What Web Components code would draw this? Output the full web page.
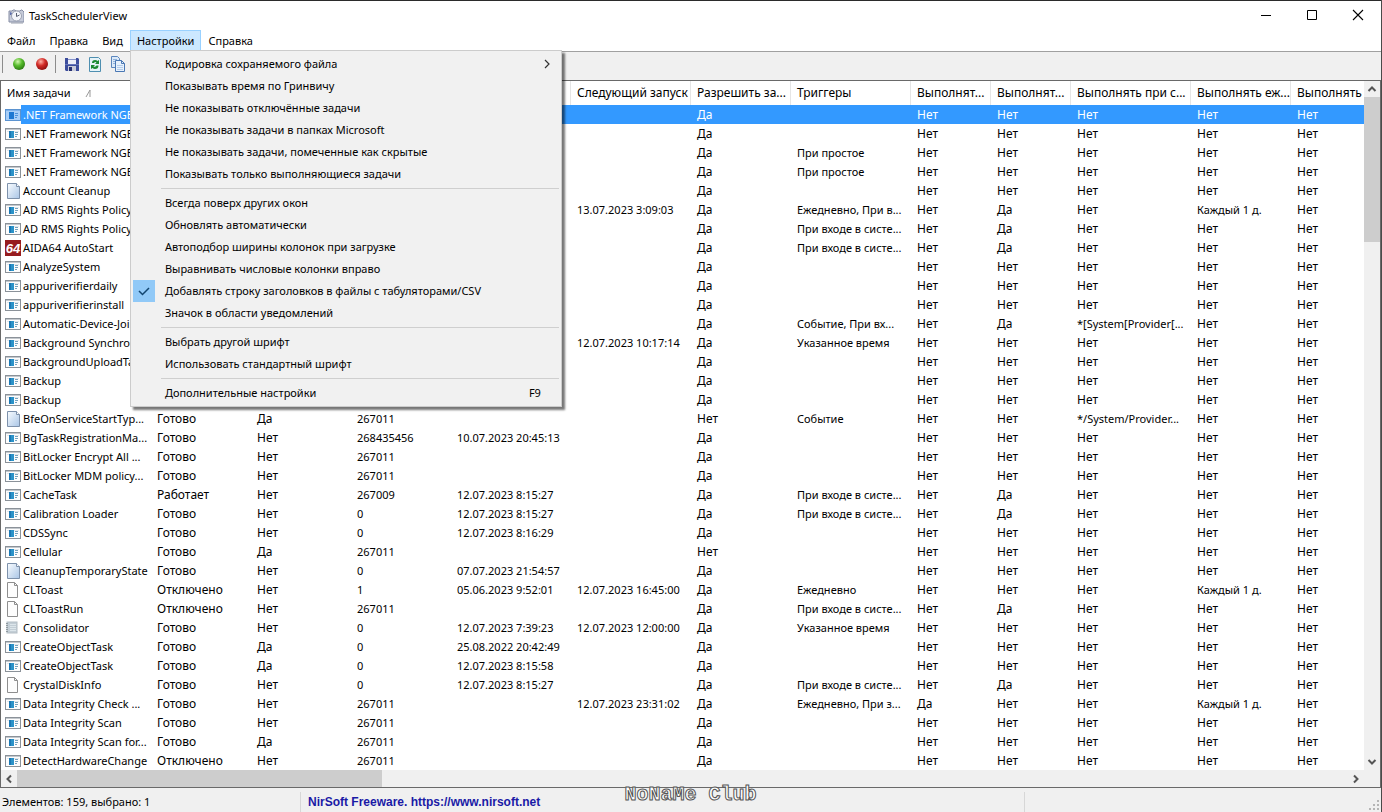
<!DOCTYPE html>
<html lang="ru">
<head>
<meta charset="utf-8">
<title>TaskSchedulerView</title>
<style>
  html, body { margin: 0; height: 100%; overflow: hidden; }
  body { font: 11px/18px "Noto Sans", "Open Sans", sans-serif; color: #000; background: #f0f0f0; }
</style>
</head>
<body>
<task-app></task-app>

<script>
const define = (name, html, setup) => customElements.define(name, class extends HTMLElement {
  constructor() {
    super();
    this.attachShadow({ mode: 'open' }).innerHTML = html;
  }
  connectedCallback() { if (setup) setup(this, this.shadowRoot); }
});

/* ---------- icons ---------- */
const ICONS = {
  clock: `<path d="M1 3h3l1-1h2l1 1h4l1-1h1l2 2v10H1z" fill="#c6cbd9" stroke="#858da4"/><path d="M2 4l2 1v2H2z" fill="#5d6fae"/><circle cx="8.500" cy="8" r="5" fill="#f3f5fa" stroke="#9ba1b1"/><path d="M8.500 5v3.500l3-1.500" fill="none" stroke="#555c70"/><path d="M3 15h12" stroke="#9aa0ae"/>`,
  app: `<rect x=".5" y="2.500" width="15" height="11" fill="#fdfdfd" stroke="#8b9299"/><path d="M1 3.500h14" stroke="#c3c8cd"/><path d="M2 5.500h12" stroke="#e4e7ea"/><rect x="4" y="5" width="5" height="7" fill="#1b78b4"/><rect x="6" y="5" width="3" height="7" fill="#2b92c8"/><path d="M10 6.500h3M10 8.500h3M10 10.500h2" stroke="#74a1bd"/>`,
  appsel: `<rect x=".5" y="2.500" width="15" height="11" fill="#a9cff8" stroke="#5b93d0"/><path d="M1 3.500h14" stroke="#7fb2ea"/><rect x="4" y="5" width="5" height="7" fill="#1e78d2"/><path d="M10 6.500h3M10 8.500h3M10 10.500h2" stroke="#4d93dc"/>`,
  docblue: `<defs><linearGradient id="g" x1="0" y1="0" x2="1" y2="1"><stop offset="0" stop-color="#fafdff"/><stop offset="1" stop-color="#a9c5e6"/></linearGradient></defs><path d="M2.500.5h9l3 3v12h-12z" fill="url(#g)" stroke="#7d91ab"/><path d="M11.500.5v3h3" fill="#fff" stroke="#7d91ab"/>`,
  doc: `<path d="M2.500.5h7l3 3v12h-10z" fill="#fdfdfd" stroke="#8e8e8e"/><path d="M9.500.5v3h3" fill="none" stroke="#8e8e8e"/>`,
  aida: `<rect width="16" height="16" fill="#961c1f"/><text x="8" y="13" text-anchor="middle" fill="#fff" font-family="Liberation Sans, sans-serif" font-weight="bold" font-style="italic" font-size="13">64</text>`,
  book: `<rect x="2" y="2" width="10" height="11" fill="#c3ced6" stroke="#b4bec5"/><path d="M5 4.500h6M5 6.500h6M5 8.500h6M5 10.500h6" stroke="#dde6eb"/><path d="M1 3.500h2M1 5.500h2M1 7.500h2M1 9.500h2M1 11.500h2" stroke="#8f999f"/>`,
  green: `<defs><radialGradient id="g" cx=".4" cy=".3" r=".7"><stop offset="0" stop-color="#d2f7b0"/><stop offset=".5" stop-color="#56bb2c"/><stop offset="1" stop-color="#2d7d14"/></radialGradient></defs><circle cx="8" cy="8" r="6" fill="url(#g)"/>`,
  red: `<defs><radialGradient id="g" cx=".4" cy=".3" r=".7"><stop offset="0" stop-color="#ffb3a8"/><stop offset=".5" stop-color="#d22c28"/><stop offset="1" stop-color="#8f1010"/></radialGradient></defs><circle cx="8" cy="8" r="6" fill="url(#g)"/>`,
  save: `<path d="M1 2h13l1 1v12H2l-1-1z" fill="#3c4d9c"/><rect x="4" y="2" width="8" height="6" fill="#eceef8"/><path d="M4 3.500h8" stroke="#8692c8"/><path d="M1 8.500h14" stroke="#6474ba"/><rect x="4" y="10" width="8" height="5" fill="#c8cbd9"/><rect x="5" y="11" width="3" height="4" fill="#273171"/>`,
  refresh: `<path d="M2.500 1.500h9l2 2v12h-11z" fill="#e6f3f8" stroke="#4f8fb0"/><path d="M5 7q0-3 3-3 1.500 0 2.500 1L12 4v4H8l1.500-1.500Q8 5.500 7 7z" fill="#1c8a32"/><path d="M11.500 9.500q0 3.500-3.500 3.500-1.500 0-2.500-1L4 13V9h4l-1.500 1.500q1.500 1 3-1z" fill="#1c8a32"/>`,
  copy: `<path d="M1.500.5h6l2 2v9h-8z" fill="#dbe9f8" stroke="#5b86bd"/><path d="M3 3.500h4M3 5.500h3M3 7.500h3" stroke="#8fb1da"/><path d="M5.500 4.500h6l3 3v8h-9z" fill="#e7f1fc" stroke="#4a78b4"/><path d="M11.500 4.500v3h3" fill="none" stroke="#4a78b4"/><path d="M7 9.500h6M7 11.500h6M7 13.500h6" stroke="#b4cdeb"/>`,
  check: `<path d="M3 8l3.500 3.500L13 5" fill="none" stroke="#12456f" stroke-width="1.500"/>`,
  sub: `<path d="M6 4l4 4-4 4" fill="none" stroke="#333" stroke-width="1.200"/>`,
  min: `<path d="M3 7.500h10" stroke="#000"/>`,
  max: `<path d="M3.500 2.500h9v9h-9z" fill="none" stroke="#000"/>`,
  close: `<path d="M3 2l10 10M13 2L3 12" stroke="#000" stroke-width="1.100"/>`,
  up: `<path d="M4.500 10L8 6.500l3.500 3.500" fill="none" stroke="#555" stroke-width="2"/>`,
  down: `<path d="M4.500 6L8 9.500 11.500 6" fill="none" stroke="#555" stroke-width="2"/>`,
  left: `<path d="M10 4.500L6.500 8l3.500 3.500" fill="none" stroke="#555" stroke-width="2"/>`,
  right: `<path d="M6 4.500L9.500 8 6 11.500" fill="none" stroke="#555" stroke-width="2"/>`,
  sort: `<path d="M6 12l4-7v7" fill="none" stroke="#999"/>`,
  grip: `<g fill="#b5b5b5"><path d="M12 4h2v2h-2zM12 8h2v2h-2zM12 12h2v2h-2zM8 8h2v2H8zM8 12h2v2H8zM4 12h2v2H4z"/></g>`
};
define('ui-icon', `<style>:host{display:block;flex:none;width:16px;height:16px}svg{display:block}</style><svg width="16" height="16" viewBox="0 0 16 16" aria-hidden="true"></svg>`,
  (el, root) => { root.querySelector('svg').innerHTML = ICONS[el.getAttribute('name')] || ''; });

/* ---------- title bar ---------- */
define('title-bar', `<style>
  :host{display:flex;align-items:center;height:29px;background:#fff;border-top:1px solid #2b2b2b;padding-left:8px}
  h1{font:inherit;margin:0 auto 0 5px}
  button{display:grid;place-items:center;width:46px;height:29px;border:0;padding:0;background:none}
</style>
<ui-icon name="clock"></ui-icon><h1><slot></slot></h1>
<button aria-label="Свернуть"><ui-icon name="min"></ui-icon></button>
<button aria-label="Развернуть"><ui-icon name="max"></ui-icon></button>
<button aria-label="Закрыть"><ui-icon name="close"></ui-icon></button>`);

/* ---------- menus ---------- */
define('menu-item', `<style>
  :host{display:block}
  button{display:flex;align-items:center;width:100%;height:22px;border:0;padding:0;background:none;font:inherit;color:inherit;text-align:left;white-space:nowrap}
  .mark{display:grid;place-items:center;width:22px;height:22px;margin-right:10px}
  :host([checked]) .mark{background:#91c9f7}
  .key{margin-left:auto;padding-right:18px}
  .sub{margin-right:4px;margin-left:auto}
</style><button role="menuitem"><span class="mark"></span><slot></slot></button>`, (el, root) => {
  if (el.hasAttribute('checked')) root.querySelector('.mark').innerHTML = '<ui-icon name="check"></ui-icon>';
  const tail = el.hasAttribute('submenu') ? '<ui-icon class="sub" name="sub"></ui-icon>'
    : el.getAttribute('key') ? `<span class="key">${el.getAttribute('key')}</span>` : '';
  root.querySelector('button').insertAdjacentHTML('beforeend', tail);
});
define('menu-separator', `<style>:host{display:block;height:1px;margin:3px 0 3px 28px;background:#cfcfcf}</style>`);
define('drop-menu', `<style>
  :host{display:block;width:426px;padding:2px;background:#f1f1f1;border:1px solid #ccc;box-shadow:3px 3px 2px #0008}
</style><slot></slot>`);
define('menu-bar', `<style>
  :host{display:flex;height:21px;background:#fff;border-bottom:1px solid #a0a0a0}
  .entry{position:relative}
  button{height:21px;padding:0 7px;border:0;background:none;font:inherit;color:inherit}
  .open button{background:#cce8ff;box-shadow:inset 0 0 0 1px #99d1ff}
  drop-menu{position:absolute;z-index:5;top:20px;left:0}
</style>
<button>Файл</button><button>Правка</button><button>Вид</button>
<div class="entry open"><button aria-expanded="true">Настройки</button>
<drop-menu role="menu">
  <menu-item submenu>Кодировка сохраняемого файла</menu-item>
  <menu-item>Показывать время по Гринвичу</menu-item>
  <menu-item>Не показывать отключённые задачи</menu-item>
  <menu-item>Не показывать задачи в папках Microsoft</menu-item>
  <menu-item>Не показывать задачи, помеченные как скрытые</menu-item>
  <menu-item>Показывать только выполняющиеся задачи</menu-item>
  <menu-separator></menu-separator>
  <menu-item>Всегда поверх других окон</menu-item>
  <menu-item>Обновлять автоматически</menu-item>
  <menu-item>Автоподбор ширины колонок при загрузке</menu-item>
  <menu-item>Выравнивать числовые колонки вправо</menu-item>
  <menu-item checked>Добавлять строку заголовков в файлы с табуляторами/CSV</menu-item>
  <menu-item>Значок в области уведомлений</menu-item>
  <menu-separator></menu-separator>
  <menu-item>Выбрать другой шрифт</menu-item>
  <menu-item>Использовать стандартный шрифт</menu-item>
  <menu-separator></menu-separator>
  <menu-item key="F9">Дополнительные настройки</menu-item>
</drop-menu></div>
<button>Справка</button>`);

/* ---------- toolbar ---------- */
define('tool-bar', `<style>
  :host{display:flex;align-items:center;height:24px;padding-bottom:4px;background:#f0f0f0;border-bottom:1px solid #696969}
  button{display:grid;place-items:center;width:23px;height:22px;border:0;padding:0;background:none}
  i{width:1px;height:18px;background:#8c8c8c;margin:0 4px 0 2px}
</style><i></i>
<button aria-label="Включить"><ui-icon name="green"></ui-icon></button>
<button aria-label="Отключить"><ui-icon name="red"></ui-icon></button><i></i>
<button aria-label="Сохранить"><ui-icon name="save"></ui-icon></button>
<button aria-label="Обновить"><ui-icon name="refresh"></ui-icon></button>
<button aria-label="Копировать"><ui-icon name="copy"></ui-icon></button>`);

/* ---------- task list ---------- */
const COLUMNS = [['Имя задачи',150],['',100],['',100],['',100],['',120],['Следующий запуск',120],['Разрешить за...',100],['Триггеры',120],['Выполнят...',80],['Выполнят...',80],['Выполнять при с...',120],['Выполнять еж...',100],['Выполнять е',100]];
const N = 'Нет', Y = 'Да', G = 'Готово', OFF = 'Отключено', R = '267011', LOGON = 'При входе в систе...';
/* icon, name, status, hidden, last result, last run, next run, on demand, triggers, boot, logon, event, daily */
const TASKS = [
  ['appsel','.NET Framework NGEN','','','','','',Y,'',N,N,N,N],
  ['app','.NET Framework NGEN','','','','','',Y,'',N,N,N,N],
  ['app','.NET Framework NGEN','','','','','',Y,'При простое',N,N,N,N],
  ['app','.NET Framework NGEN','','','','','',Y,'При простое',N,N,N,N],
  ['docblue','Account Cleanup','','','','','',Y,'',N,N,N,N],
  ['app','AD RMS Rights Policy','','','','','13.07.2023 3:09:03',Y,'Ежедневно, При в...',N,Y,N,'Каждый 1 д.'],
  ['app','AD RMS Rights Policy','','','','','',Y,LOGON,N,Y,N,N],
  ['aida','AIDA64 AutoStart','','','','','',Y,LOGON,N,Y,N,N],
  ['app','AnalyzeSystem','','','','','',Y,'',N,N,N,N],
  ['app','appuriverifierdaily','','','','','',Y,'',N,N,N,N],
  ['app','appuriverifierinstall','','','','','',Y,'',N,N,N,N],
  ['app','Automatic-Device-Join','','','','','',Y,'Событие, При вх...',N,Y,'*[System[Provider[...',N],
  ['app','Background Synchron','','','','','12.07.2023 10:17:14',Y,'Указанное время',N,N,N,N],
  ['app','BackgroundUploadTask','','','','','',Y,'',N,N,N,N],
  ['app','Backup','','','','','',Y,'',N,N,N,N],
  ['app','Backup','','','','','',Y,'',N,N,N,N],
  ['docblue','BfeOnServiceStartTyp...',G,Y,R,'','',N,'Событие',N,N,'*/System/Provider...',N],
  ['app','BgTaskRegistrationMa...',G,N,'268435456','10.07.2023 20:45:13','',Y,'',N,N,N,N],
  ['app','BitLocker Encrypt All ...',G,N,R,'','',Y,'',N,N,N,N],
  ['app','BitLocker MDM policy...',G,N,R,'','',Y,'',N,N,N,N],
  ['app','CacheTask','Работает',N,'267009','12.07.2023 8:15:27','',Y,LOGON,N,Y,N,N],
  ['app','Calibration Loader',G,N,'0','12.07.2023 8:15:27','',Y,LOGON,N,Y,N,N],
  ['app','CDSSync',G,N,'0','12.07.2023 8:16:29','',Y,'',N,N,N,N],
  ['app','Cellular',G,Y,R,'','',N,'',N,N,N,N],
  ['docblue','CleanupTemporaryState',G,N,'0','07.07.2023 21:54:57','',Y,'',N,N,N,N],
  ['doc','CLToast',OFF,N,'1','05.06.2023 9:52:01','12.07.2023 16:45:00',Y,'Ежедневно',N,N,N,'Каждый 1 д.'],
  ['doc','CLToastRun',OFF,N,R,'','',Y,LOGON,N,Y,N,N],
  ['book','Consolidator',G,N,'0','12.07.2023 7:39:23','12.07.2023 12:00:00',Y,'Указанное время',N,N,N,N],
  ['app','CreateObjectTask',G,Y,'0','25.08.2022 20:42:49','',Y,'',N,N,N,N],
  ['app','CreateObjectTask',G,Y,'0','12.07.2023 8:15:58','',Y,'',N,N,N,N],
  ['doc','CrystalDiskInfo',G,N,'0','12.07.2023 8:15:27','',Y,LOGON,N,Y,N,N],
  ['app','Data Integrity Check ...',G,N,R,'','12.07.2023 23:31:02',Y,'Ежедневно, При з...',Y,N,N,'Каждый 1 д.'],
  ['app','Data Integrity Scan',G,N,R,'','',Y,'',N,N,N,N],
  ['app','Data Integrity Scan for...',G,Y,R,'','',Y,'',N,N,N,N],
  ['app','DetectHardwareChange',OFF,N,R,'','',Y,'',N,N,N,N]
];
const FLAGS = [N, Y, G, OFF, 'Работает'];
define('task-table', `<style>
  :host{display:block;overflow:hidden;background:#fff}
  table{table-layout:fixed;border-collapse:separate;border-spacing:0;width:1390px}
  th,td{padding:0 0 0 6px;font-weight:normal;text-align:left;white-space:nowrap;overflow:hidden}
  th{height:24px;box-shadow:inset -1px 0 #e5e5e5}
  th,.flag{font-size:12px}
  th:first-child{font-size:11px}
  td{height:19px;line-height:19px}
  .head{display:flex;align-items:center;gap:9px}
  td:first-child{padding-left:4px}
  .name{display:flex;align-items:center;height:19px}
  .name span{flex:1;padding-left:2px;line-height:19px}
  tr.sel td:not(:first-child), tr.sel .name span{background:#3399ff;color:#fff}
</style><table><colgroup></colgroup><thead><tr></tr></thead><tbody></tbody></table>`, (el, root) => {
  root.querySelector('colgroup').innerHTML = COLUMNS.map(c => `<col style="width:${c[1]}px">`).join('');
  root.querySelector('thead tr').innerHTML = COLUMNS.map((c, i) => i ? `<th>${c[0]}</th>`
    : `<th><div class="head">${c[0]}<ui-icon name="sort"></ui-icon></div></th>`).join('');
  root.querySelector('tbody').innerHTML = TASKS.map(([icon, name, ...rest], i) =>
    `<tr${i ? '' : ' class="sel"'}><td><div class="name"><ui-icon name="${icon}"></ui-icon><span>${name}</span></div></td>${[...rest, N].map(v => `<td${FLAGS.includes(v) ? ' class="flag"' : ''}>${v}</td>`).join('')}</tr>`).join('');
});

/* ---------- scroll bars ---------- */
define('scroll-bar', `<style>
  :host{display:flex;background:#f0f0f0;width:16px;flex-direction:column;justify-content:space-between}
  :host([horizontal]){width:auto;height:17px;flex-direction:row;align-items:center}
  .track{flex:1;align-self:stretch}
  .thumb{background:#cdcdcd;height:22%}
  :host([horizontal]) .thumb{width:27.4%;height:100%}
</style><ui-icon></ui-icon><div class="track"><div class="thumb"></div></div><ui-icon></ui-icon>`, (el, root) => {
  const names = el.hasAttribute('horizontal') ? ['left', 'right'] : ['up', 'down'];
  root.querySelectorAll('ui-icon').forEach((icon, i) => {
    const fresh = document.createElement('ui-icon');
    fresh.setAttribute('name', names[i]);
    icon.replaceWith(fresh);
  });
});

/* ---------- status bar ---------- */
define('status-bar', `<style>
  :host{display:flex;align-items:center;height:24px;background:#f0f0f0;border-top:1px solid #696969;position:relative}
  .panel{height:20px;line-height:20px;margin-top:4px;box-sizing:border-box;border-right:1px solid #d7d7d7}
  .count{width:301px;padding-left:2px}
  .site{flex:1;padding-left:7px}
  .rest{width:356px;border:0;display:flex;align-items:flex-end;justify-content:flex-end}
  a{font:bold 12px/18px "Liberation Sans", sans-serif;color:#1a1aa6;text-decoration:none}
  .mark{position:absolute;left:50%;top:-5px;transform:translateX(-50%);font:bold 20px/24px "Liberation Mono", monospace;color:#fff;-webkit-text-stroke:1px #555;white-space:nowrap}
</style>
<div class="panel count">Элементов: 159, выбрано: 1</div>
<div class="panel site"><a href="https://www.nirsoft.net">NirSoft Freeware. https://www.nirsoft.net</a></div>
<div class="panel rest"><ui-icon name="grip"></ui-icon></div>
<div class="mark">NoNaMe Club</div>`);

/* ---------- window ---------- */
define('task-app', `<style>
  :host{display:flex;flex-direction:column;min-height:100vh;box-sizing:border-box;border-right:1px solid #4a4a4a}
  main{flex:1;display:grid;grid-template:minmax(0,1fr) 17px / minmax(0,1fr) 16px;border:solid #696969;border-width:0 1px}
  .corner{background:#f0f0f0}
</style>
<title-bar>TaskSchedulerView</title-bar>
<menu-bar></menu-bar>
<tool-bar></tool-bar>
<main>
  <task-table></task-table><scroll-bar></scroll-bar>
  <scroll-bar horizontal></scroll-bar><div class="corner"></div>
</main>
<status-bar></status-bar>`);
</script>
</body>
</html>
